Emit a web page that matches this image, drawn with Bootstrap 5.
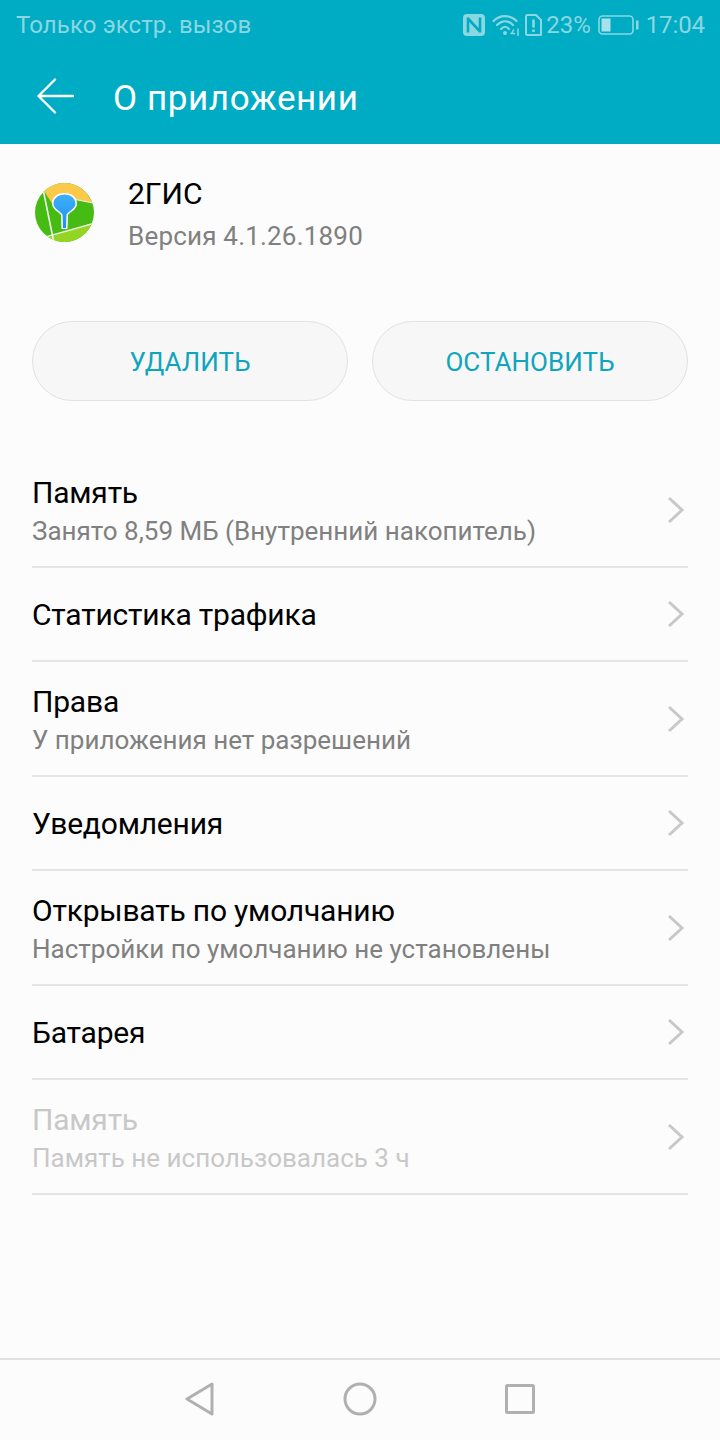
<!DOCTYPE html>
<html lang="ru">
<head>
    <meta charset="UTF-8">
    <title>О приложении</title>
    <link href="https://cdn.jsdelivr.net/npm/bootstrap@5.3.0/dist/css/bootstrap.min.css" rel="stylesheet">
    <style>
        html, body { height: 100%; }
        body { font-family: Roboto, "Liberation Sans", sans-serif; background: #fcfcfc; color: #000; overflow: hidden; }
        .app-screen { height: 1440px; }
        .top-bar { background: #00acc4; height: 144px; }
        .status-line { height: 48px; padding: 2px 15px 0 16px; color: #8ad7e2; font-size: 24px; line-height: 1; letter-spacing: .1px; }
        .st-wifi { margin-left: 7px; }
        .st-sim { margin-left: 5px; }
        .st-pct { margin-left: 4px; letter-spacing: 0; }
        .st-batt { margin-left: 7px; }
        .st-time { margin-left: 7px; letter-spacing: -.1px; }
        .tool-line { height: 96px; color: #fff; }
        .back-btn { width: 113px; padding-left: 37px; }
        .tool-title { font-size: 35px; letter-spacing: .6px; padding-top: 7px; }
        .app-head { height: 177px; padding: 39px 32px 0 35px; }
        .app-logo { width: 60px; height: 60px; margin-right: 33px; }
        .app-name { font-size: 30px; line-height: 34px; margin-top: -6px; }
        .app-ver { font-size: 26px; line-height: 30px; color: #808080; margin-top: 10px; letter-spacing: .2px; }
        .action-row { padding: 0 32px; gap: 24px; }
        .action-btn { flex: 1; height: 80px; border-radius: 40px; background: #f7f7f7; border: 1px solid #e2e2e2; color: #0fa5bd; font-size: 26px; padding-top: 8px; letter-spacing: .05px; }
        .action-btn:hover { background: #f7f7f7; border-color: #e2e2e2; color: #0fa5bd; }
        .info-list { margin: 52px 32px 0; }
        .info-row { border-bottom: 2px solid #e4e4e4; padding: 0; }
        .info-row.two-line { height: 115px; }
        .info-row.one-line { height: 94px; }
        .info-row.one-line .row-title { padding-top: 2px; }
        .row-title { font-size: 30px; line-height: 36px; letter-spacing: -.2px; padding-top: 1px; }
        .row-sub { font-size: 26px; line-height: 30px; color: #808080; margin-top: 5px; }
        .info-row.muted-row .row-title, .info-row.muted-row .row-sub { color: #c8c8c8; }
        .row-arrow { width: 18px; height: 28px; margin-right: 3px; }
        .nav-foot { margin-top: auto; height: 82px; border-top: 2px solid #e2e2e2; padding-bottom: 2px; }
        .nav-slot { width: 160px; }
    </style>
</head>
<body>
    <div class="app-screen d-flex flex-column">
        <!-- шапка -->
        <div class="top-bar">
            <div class="status-line d-flex align-items-center justify-content-between">
                <span>Только экстр. вызов</span>
                <div class="d-flex align-items-center">
                    <svg width="22" height="22" viewBox="0 0 22 22">
                        <rect width="22" height="22" rx="4" fill="#8ad7e2"/>
                        <path d="M5 3.500v15M5 4.500 17 17.500M17 3.500v15" fill="none" stroke="#00acc4" stroke-width="2.600"/>
                    </svg>
                    <svg class="st-wifi" width="28" height="22" viewBox="0 0 28 22" fill="none" stroke="#8ad7e2" stroke-width="2.200" stroke-linecap="round">
                        <path d="M1.500 7C8 .5 18 .5 24.500 7M5 11c5-5 11-5 16 0M9 15c3-3 5-3 8 0"/>
                        <circle cx="13" cy="19" r="2" fill="#8ad7e2" stroke="none"/>
                        <path d="M19 19.500h3.500M21.500 16l-2 3.500M26 15v7" stroke-width="1.500"/>
                    </svg>
                    <svg class="st-sim" width="17" height="22" viewBox="0 0 17 22" fill="none" stroke="#8ad7e2" stroke-width="2">
                        <path d="M1 2.500A1.500 1.500 0 0 1 2.500 1H11l5 5v14.500a.500.500 0 0 1-.500.500h-13A1.500 1.500 0 0 1 1 19.500z"/>
                        <path d="M8.500 5.500v8M8.500 15.500v2.500" stroke-width="2.600"/>
                    </svg>
                    <span class="st-pct">23%</span>
                    <svg class="st-batt" width="41" height="20" viewBox="0 0 41 20" fill="none">
                        <rect x="1" y="1" width="34" height="18" rx="3.500" stroke="#8ad7e2" stroke-width="1.600"/>
                        <rect x="3.500" y="3.500" width="9" height="13" fill="#a8e1ea"/>
                        <rect x="38" y="5.500" width="2.500" height="9" fill="#8ad7e2"/>
                    </svg>
                    <span class="st-time">17:04</span>
                </div>
            </div>
            <div class="tool-line d-flex align-items-center">
                <div class="back-btn d-flex">
                    <svg width="37" height="36" viewBox="0 0 37 36" fill="none" stroke="#fff" stroke-width="2.400" stroke-linecap="round" stroke-linejoin="round">
                        <path d="M36 18H2M18 1.500 1.500 18 18 34.500"/>
                    </svg>
                </div>
                <div class="tool-title">О приложении</div>
            </div>
        </div>

        <!-- приложение -->
        <div class="app-head d-flex align-items-start">
            <svg class="app-logo" viewBox="0 0 60 60">
                <defs>
                    <clipPath id="logo-round"><circle cx="29.500" cy="29.500" r="29.500"/></clipPath>
                    <linearGradient id="pin-fill" x1="0" y1="0" x2="0" y2="1">
                        <stop offset="0" stop-color="#3fb0f7"/>
                        <stop offset="1" stop-color="#1f8ff0"/>
                    </linearGradient>
                </defs>
                <g clip-path="url(#logo-round)">
                    <rect width="60" height="60" fill="#46bb14"/>
                    <path d="M9 8Q29-9 50 8L58 20 34 15 18 22z" fill="#fdc94a"/>
                    <path d="M8 56 60 40V60H8z" fill="#93d522"/>
                    <path d="M8.500 8.500 19 60M0 57 60 40" stroke="#eef8e2" stroke-width="1.600" fill="none"/>
                    <path d="M38 16 58 20" stroke="#eef8e2" stroke-width="1.200" fill="none"/>
                    <path d="M29.500 10c7.500 0 12.500 4.500 12.500 10.500 0 6-6.500 8-9 11.500l-.5 14h-6l-.5-14c-2.500-3.500-9-5.500-9-11.500 0-6 5-10.500 12.500-10.500z" fill="#fff"/>
                    <path d="M29.500 11.500c6.500 0 11 4 11 9 0 5-6.500 7.500-9 11l-.5 13.500h-3l-.5-13.500c-2.500-3.500-9-6-9-11 0-5 4.500-9 11-9z" fill="url(#pin-fill)"/>
                </g>
            </svg>
            <div>
                <div class="app-name">2ГИС</div>
                <div class="app-ver">Версия 4.1.26.1890</div>
            </div>
        </div>

        <div class="action-row d-flex">
            <button type="button" class="btn action-btn">УДАЛИТЬ</button>
            <button type="button" class="btn action-btn">ОСТАНОВИТЬ</button>
        </div>

        <!-- список -->
        <div class="info-list list-group list-group-flush">
            <div class="info-row two-line d-flex align-items-center justify-content-between">
                <div>
                    <div class="row-title">Память</div>
                    <div class="row-sub">Занято 8,59 МБ (Внутренний накопитель)</div>
                </div>
                <svg class="row-arrow" viewBox="0 0 18 28" fill="none" stroke="#c8c8c8" stroke-width="3"><path d="M2 2l13 12L2 26"/></svg>
            </div>
            <div class="info-row one-line d-flex align-items-center justify-content-between">
                <div class="row-title">Статистика трафика</div>
                <svg class="row-arrow" viewBox="0 0 18 28" fill="none" stroke="#c8c8c8" stroke-width="3"><path d="M2 2l13 12L2 26"/></svg>
            </div>
            <div class="info-row two-line d-flex align-items-center justify-content-between">
                <div>
                    <div class="row-title">Права</div>
                    <div class="row-sub">У приложения нет разрешений</div>
                </div>
                <svg class="row-arrow" viewBox="0 0 18 28" fill="none" stroke="#c8c8c8" stroke-width="3"><path d="M2 2l13 12L2 26"/></svg>
            </div>
            <div class="info-row one-line d-flex align-items-center justify-content-between">
                <div class="row-title">Уведомления</div>
                <svg class="row-arrow" viewBox="0 0 18 28" fill="none" stroke="#c8c8c8" stroke-width="3"><path d="M2 2l13 12L2 26"/></svg>
            </div>
            <div class="info-row two-line d-flex align-items-center justify-content-between">
                <div>
                    <div class="row-title">Открывать по умолчанию</div>
                    <div class="row-sub">Настройки по умолчанию не установлены</div>
                </div>
                <svg class="row-arrow" viewBox="0 0 18 28" fill="none" stroke="#c8c8c8" stroke-width="3"><path d="M2 2l13 12L2 26"/></svg>
            </div>
            <div class="info-row one-line d-flex align-items-center justify-content-between">
                <div class="row-title">Батарея</div>
                <svg class="row-arrow" viewBox="0 0 18 28" fill="none" stroke="#c8c8c8" stroke-width="3"><path d="M2 2l13 12L2 26"/></svg>
            </div>
            <div class="info-row two-line muted-row d-flex align-items-center justify-content-between">
                <div>
                    <div class="row-title">Память</div>
                    <div class="row-sub">Память не использовалась 3 ч</div>
                </div>
                <svg class="row-arrow" viewBox="0 0 18 28" fill="none" stroke="#c8c8c8" stroke-width="3"><path d="M2 2l13 12L2 26"/></svg>
            </div>
        </div>

        <!-- навигация -->
        <div class="nav-foot d-flex align-items-center justify-content-center">
            <div class="nav-slot d-flex justify-content-center">
                <svg width="30" height="34" viewBox="0 0 30 34" fill="none" stroke="#b0b0b0" stroke-width="3" stroke-linejoin="round"><path d="M27 2v30L2 17z"/></svg>
            </div>
            <div class="nav-slot d-flex justify-content-center">
                <svg width="34" height="34" viewBox="0 0 34 34" fill="none" stroke="#b0b0b0" stroke-width="3"><circle cx="17" cy="17" r="15"/></svg>
            </div>
            <div class="nav-slot d-flex justify-content-center">
                <svg width="30" height="30" viewBox="0 0 30 30" fill="none" stroke="#b0b0b0" stroke-width="3" stroke-linejoin="round"><rect x="1.500" y="1.500" width="27" height="27" rx="1"/></svg>
            </div>
        </div>
    </div>
    <script src="https://cdn.jsdelivr.net/npm/bootstrap@5.3.0/dist/js/bootstrap.bundle.min.js"></script>
</body>
</html>
